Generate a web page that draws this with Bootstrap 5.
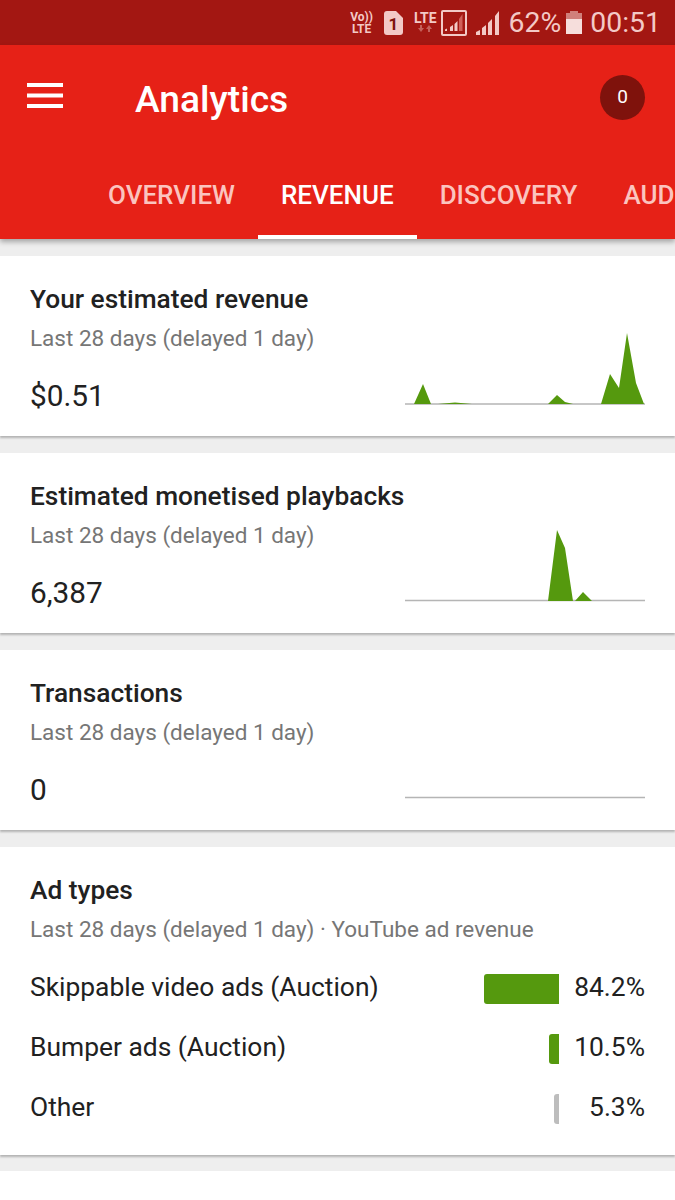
<!DOCTYPE html>
<html lang="en">
<head>
  <meta charset="UTF-8">
  <title>Analytics</title>
  <link rel="stylesheet" href="https://cdn.jsdelivr.net/npm/bootstrap@5.3.0/dist/css/bootstrap.min.css">
  <style>
    body {
      background: #fff;
      color: #212121;
      font-family: Roboto, "Liberation Sans", sans-serif;
      overflow: hidden;
    }
    .status-bar {
      height: 45px;
      background: #a31712;
      color: #f3c9c6;
      padding-right: 14px;
    }
    .status-text { font-size: 28.4px; line-height: 45px; }
    .status-mini {
      font-size: 12px;
      font-weight: 700;
      line-height: 12px;
      text-align: center;
    }
    .status-lte { font-size: 14px; line-height: 13px; margin-right: 4px; margin-top: -2px; }
    .app-header {
      height: 194px;
      background: #e62117;
      color: #fff;
      position: relative;
      z-index: 2;
      box-shadow: 0 3px 5px rgba(0, 0, 0, .3);
    }
    .top-row { height: 108px; padding: 0 30px 0 27px; }
    .menu-icon { width: 36px; height: 25px; margin-top: -8px; }
    .app-title {
      font-size: 37.2px;
      font-weight: 500;
      line-height: 44px;
      margin: 0 0 0 72px;
    }
    .notif-count {
      width: 45px;
      height: 45px;
      background: #7f120c;
      font-size: 19px;
      margin-top: -4px;
    }
    .tab-strip { margin-left: 85px; height: 86px; width: 590px; overflow: hidden; }
    .tab-item {
      height: 86px;
      padding: 24px 23px 0;
      font-size: 26px;
      font-weight: 500;
      line-height: 36px;
      color: #fbc4bf;
      white-space: nowrap;
      border-bottom: 4px solid transparent;
      text-decoration: none;
    }
    .tab-item.active-tab { color: #fff; border-bottom-color: #fff; }
    .cards-wrap { background: #eee; padding: 17px 0 16px; gap: 17px; }
    .stat-card {
      background: #fff;
      height: 180px;
      padding: 26px 30px 0;
      box-shadow: 0 2px 2px rgba(0, 0, 0, .25);
    }
    .ads-card { height: 308px; }
    .stat-title { font-size: 26.3px; font-weight: 500; line-height: 34px; }
    .stat-sub { font-size: 22.5px; line-height: 30px; color: #767676; margin-top: 7px; }
    .stat-value { font-size: 29.8px; line-height: 36px; margin-top: 25px; }
    .spark { width: 240px; height: 80px; margin-top: -23px; flex: none; }
    .ad-rows { margin-top: 14px; }
    .ad-row { height: 60px; font-size: 26.4px; }
    .ad-bar { height: 30px; margin-top: 2px; border-radius: 3px 0 0 3px; background: #55990e; }
    .ad-bar.bar-grey { background: #bdbdbd; }
    .ad-pct { width: 86px; text-align: right; }
  </style>
</head>
<body>
  <div class="status-bar d-flex justify-content-end align-items-center">
    <div class="status-mini" style="margin-right:11px">Vo))<br>LTE</div>
    <svg width="19" height="24" viewBox="0 0 19 24" style="margin-right:11px">
      <path d="M3 0h9l7 7v14a3 3 0 0 1-3 3H3a3 3 0 0 1-3-3V3a3 3 0 0 1 3-3z" fill="#f3c9c6"/>
      <text x="9.5" y="19" text-anchor="middle" font-family="Roboto" font-weight="700" font-size="17" fill="#7f120c">1</text>
    </svg>
    <div class="status-mini status-lte">LTE<svg class="d-block mx-auto" width="14" height="7" viewBox="0 0 14 7"><path d="M3 7 0 3h2V0h2v3h2zM11 0l3 4h-2v3h-2V4H8z" fill="#c4605b"/></svg></div>
    <svg width="26" height="26" viewBox="0 0 26 26" style="margin-right:9px">
      <rect x="1" y="1" width="24" height="24" rx="1" fill="none" stroke="#f3c9c6" stroke-width="2"/>
      <path d="M4 19.500l2-1V21H4zM9 17l3-2v6H9zM13.500 14l3-3v10h-3z" fill="#f3c9c6"/>
      <path d="M18 9l3.500-5v17H18z" fill="#d0605a"/>
    </svg>
    <svg width="24" height="24" viewBox="0 0 24 24" style="margin-right:9px">
      <path d="M0 24v-3l4-2v5zM6 24v-7l4-3v10zM12 24V12l4-4v16zM19 24V5l4-5v24z" fill="#f3c9c6"/>
    </svg>
    <span class="status-text" style="margin-right:5px">62%</span>
    <svg width="16" height="23" viewBox="0 0 16 23" style="margin-right:8px">
      <path d="M4 0h8v2h4v6H0V2h4z" fill="#d0807b"/>
      <path d="M0 8h16v15H0z" fill="#f6dedc"/>
    </svg>
    <span class="status-text">00:51</span>
  </div>

  <header class="app-header">
    <div class="top-row d-flex align-items-center">
      <svg class="menu-icon" viewBox="0 0 36 25">
        <path d="M0 0h36v4H0zM0 10.500h36v4H0zM0 21h36v4H0z" fill="#fff"/>
      </svg>
      <div class="app-title flex-grow-1">Analytics</div>
      <div class="notif-count rounded-circle d-flex align-items-center justify-content-center">0</div>
    </div>
    <nav class="tab-strip d-flex flex-nowrap">
      <a class="tab-item" href="#">OVERVIEW</a>
      <a class="tab-item active-tab" href="#">REVENUE</a>
      <a class="tab-item" href="#">DISCOVERY</a>
      <a class="tab-item" href="#">AUDIENCE</a>
    </nav>
  </header>

  <main class="cards-wrap d-flex flex-column">
    <section class="stat-card">
      <div class="stat-title">Your estimated revenue</div>
      <div class="stat-sub">Last 28 days (delayed 1 day)</div>
      <div class="d-flex justify-content-between align-items-start">
        <div class="stat-value">$0.51</div>
        <svg class="spark" viewBox="0 0 240 80">
          <path d="M0 74h240" stroke="#b5b5b5" stroke-width="1.500"/>
          <path d="M9 74 18 54 26 74zM33 74 50 72.500 67 74zM143 74 152 65 160 72 168 74zM196 74 205 44 214 58 222 3 231 53 239 74z" fill="#55990e"/>
        </svg>
      </div>
    </section>

    <section class="stat-card">
      <div class="stat-title">Estimated monetised playbacks</div>
      <div class="stat-sub">Last 28 days (delayed 1 day)</div>
      <div class="d-flex justify-content-between align-items-start">
        <div class="stat-value">6,387</div>
        <svg class="spark" viewBox="0 0 240 80">
          <path d="M0 73.500h240" stroke="#b5b5b5" stroke-width="1.500"/>
          <path d="M143 74 152 3 160 21 168 74zM170 74 178 65 187 74z" fill="#55990e"/>
        </svg>
      </div>
    </section>

    <section class="stat-card">
      <div class="stat-title">Transactions</div>
      <div class="stat-sub">Last 28 days (delayed 1 day)</div>
      <div class="d-flex justify-content-between align-items-start">
        <div class="stat-value">0</div>
        <svg class="spark" viewBox="0 0 240 80">
          <path d="M0 73.500h240" stroke="#b5b5b5" stroke-width="1.500"/>
        </svg>
      </div>
    </section>

    <section class="stat-card ads-card">
      <div class="stat-title">Ad types</div>
      <div class="stat-sub">Last 28 days (delayed 1 day) · YouTube ad revenue</div>
      <div class="ad-rows">
        <div class="ad-row d-flex align-items-center">
          <span class="flex-grow-1">Skippable video ads (Auction)</span>
          <span class="ad-bar" style="width:75px"></span>
          <span class="ad-pct">84.2%</span>
        </div>
        <div class="ad-row d-flex align-items-center">
          <span class="flex-grow-1">Bumper ads (Auction)</span>
          <span class="ad-bar" style="width:10px"></span>
          <span class="ad-pct">10.5%</span>
        </div>
        <div class="ad-row d-flex align-items-center">
          <span class="flex-grow-1">Other</span>
          <span class="ad-bar bar-grey" style="width:5px"></span>
          <span class="ad-pct">5.3%</span>
        </div>
      </div>
    </section>
  </main>
  <script src="https://cdn.jsdelivr.net/npm/bootstrap@5.3.0/dist/js/bootstrap.bundle.min.js"></script>
</body>
</html>
